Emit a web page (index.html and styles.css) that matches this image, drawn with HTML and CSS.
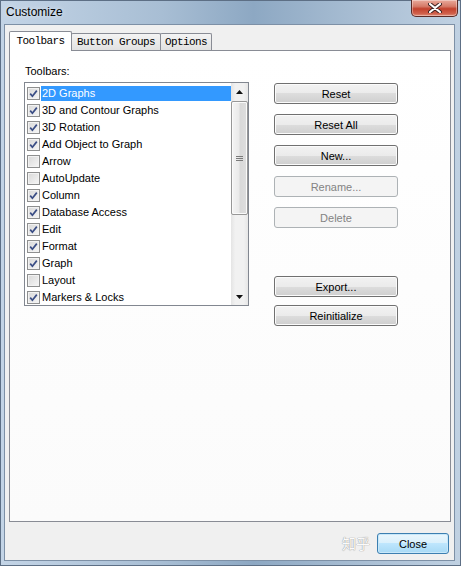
FILE: index.html
```html
<!DOCTYPE html>
<html>
<head>
<meta charset="utf-8">
<title>Customize</title>
<link rel="stylesheet" href="styles.css">
</head>
<body>
<div class="window">
  <div class="titlebar">
    <span class="title">Customize</span>
    <div class="close-x">
      <svg width="14" height="10" viewBox="0 0 14 10"><path d="M2 1 L12 9 M12 1 L2 9" stroke="#3b2020" stroke-width="4" stroke-linecap="round"/><path d="M2 1 L12 9 M12 1 L2 9" stroke="#fff" stroke-width="2.2" stroke-linecap="round"/></svg>
    </div>
  </div>
  <div class="client">
    <div class="tabs">
      <div class="tab active tab-toolbars">Toolbars</div>
      <div class="tab tab-groups">Button Groups</div>
      <div class="tab tab-options">Options</div>
    </div>
    <div class="panel">
      <div class="left">
        <div class="label">Toolbars:</div>
        <div class="listbox">
          <ul class="items">
            <li class="row sel"><span class="cb on"><svg width="11" height="11" viewBox="0 0 11 11"><path d="M2.2 5.6 L4.4 8.2 L8.8 2.6" fill="none" stroke="#3a4d85" stroke-width="1.7"/></svg></span><span class="text">2D Graphs</span></li>
            <li class="row"><span class="cb on"><svg width="11" height="11" viewBox="0 0 11 11"><path d="M2.2 5.6 L4.4 8.2 L8.8 2.6" fill="none" stroke="#3a4d85" stroke-width="1.7"/></svg></span><span class="text">3D and Contour Graphs</span></li>
            <li class="row"><span class="cb on"><svg width="11" height="11" viewBox="0 0 11 11"><path d="M2.2 5.6 L4.4 8.2 L8.8 2.6" fill="none" stroke="#3a4d85" stroke-width="1.7"/></svg></span><span class="text">3D Rotation</span></li>
            <li class="row"><span class="cb on"><svg width="11" height="11" viewBox="0 0 11 11"><path d="M2.2 5.6 L4.4 8.2 L8.8 2.6" fill="none" stroke="#3a4d85" stroke-width="1.7"/></svg></span><span class="text">Add Object to Graph</span></li>
            <li class="row"><span class="cb"></span><span class="text">Arrow</span></li>
            <li class="row"><span class="cb"></span><span class="text">AutoUpdate</span></li>
            <li class="row"><span class="cb on"><svg width="11" height="11" viewBox="0 0 11 11"><path d="M2.2 5.6 L4.4 8.2 L8.8 2.6" fill="none" stroke="#3a4d85" stroke-width="1.7"/></svg></span><span class="text">Column</span></li>
            <li class="row"><span class="cb on"><svg width="11" height="11" viewBox="0 0 11 11"><path d="M2.2 5.6 L4.4 8.2 L8.8 2.6" fill="none" stroke="#3a4d85" stroke-width="1.7"/></svg></span><span class="text">Database Access</span></li>
            <li class="row"><span class="cb on"><svg width="11" height="11" viewBox="0 0 11 11"><path d="M2.2 5.6 L4.4 8.2 L8.8 2.6" fill="none" stroke="#3a4d85" stroke-width="1.7"/></svg></span><span class="text">Edit</span></li>
            <li class="row"><span class="cb on"><svg width="11" height="11" viewBox="0 0 11 11"><path d="M2.2 5.6 L4.4 8.2 L8.8 2.6" fill="none" stroke="#3a4d85" stroke-width="1.7"/></svg></span><span class="text">Format</span></li>
            <li class="row"><span class="cb on"><svg width="11" height="11" viewBox="0 0 11 11"><path d="M2.2 5.6 L4.4 8.2 L8.8 2.6" fill="none" stroke="#3a4d85" stroke-width="1.7"/></svg></span><span class="text">Graph</span></li>
            <li class="row"><span class="cb"></span><span class="text">Layout</span></li>
            <li class="row"><span class="cb on"><svg width="11" height="11" viewBox="0 0 11 11"><path d="M2.2 5.6 L4.4 8.2 L8.8 2.6" fill="none" stroke="#3a4d85" stroke-width="1.7"/></svg></span><span class="text">Markers &amp; Locks</span></li>
          </ul>
          <div class="scrollbar">
            <div class="sb-btn"><svg width="7" height="4" viewBox="0 0 7 4"><path d="M0 4 L3.5 0 L7 4 Z" fill="#111"/></svg></div>
            <div class="thumb"><svg width="7" height="7" viewBox="0 0 7 7"><path d="M0 1.5 H7 M0 3.5 H7 M0 5.5 H7" stroke="#7a7a7a" stroke-width="1"/></svg></div>
            <div class="track"></div>
            <div class="sb-btn"><svg width="7" height="4" viewBox="0 0 7 4"><path d="M0 0 L3.5 4 L7 0 Z" fill="#111"/></svg></div>
          </div>
        </div>
      </div>
      <div class="actions">
        <div class="btn">Reset</div>
        <div class="btn">Reset All</div>
        <div class="btn">New...</div>
        <div class="btn disabled">Rename...</div>
        <div class="btn disabled">Delete</div>
        <div class="btn export">Export...</div>
        <div class="btn reinit">Reinitialize</div>
      </div>
    </div>
    <div class="footer">
      <span class="watermark">知乎</span>
      <div class="btn default">Close</div>
    </div>
  </div>
</div>
</body>
</html>
```

FILE: styles.css
```css
* { box-sizing: border-box; margin: 0; padding: 0; }
html, body { width: 461px; height: 566px; overflow: hidden; }
body {
  font-family: "Liberation Sans", Arial, sans-serif;
  font-size: 11px;
  color: #000;
  background: #fff;
}
.window {
  width: 461px;
  height: 566px;
  display: flex;
  flex-direction: column;
  position: relative;
  border: 1px solid #5d6f85;
  background: linear-gradient(to right, #c3d4e6 0%, #a8bed4 35%, #8da8c3 55%, #a5bbd1 75%, #c0d1e2 100%);
}
.titlebar {
  height: 23px;
  flex: none;
  display: flex;
  align-items: center;
  padding-left: 5px;
  padding-bottom: 2px;
}
.title {
  font-size: 12px;
  color: #000;
  text-shadow: 0 0 5px rgba(255, 255, 255, 0.7);
}
.close-x {
  position: absolute;
  left: 410px;
  top: -1px;
  width: 47px;
  height: 17px;
  border: 1px solid #5a2a26;
  border-top: none;
  border-radius: 0 0 5px 5px;
  background: linear-gradient(#e9aa9c 0%, #d57a68 40%, #c2412d 55%, #d0614c 85%, #e0907c 100%);
  box-shadow: inset 0 0 0 1px rgba(255, 255, 255, 0.35);
  display: flex;
  align-items: center;
  justify-content: center;
}
.client {
  flex: 1;
  margin: 0 5px 4px 3px;
  background: #f0f0f0;
  border: 1px solid #7d90a6;
  display: flex;
  flex-direction: column;
  padding: 6px 0 0 4px;
}
.tabs {
  display: flex;
  align-items: flex-end;
  height: 19px;
  position: relative;
  z-index: 1;
}
.tab {
  height: 17px;
  border: 1px solid #898c95;
  border-bottom: none;
  background: linear-gradient(#f4f4f4, #e1e1e1);
  font-family: "Liberation Mono", "Courier New", monospace;
  font-size: 11px;
  letter-spacing: -0.6px;
  display: flex;
  align-items: center;
  justify-content: center;
  margin-left: -1px;
  border-radius: 2px 2px 0 0;
}
.tab.active {
  height: 20px;
  margin-bottom: -1px;
  margin-left: 0;
  background: #fff;
  position: relative;
  z-index: 2;
  padding-bottom: 2px;
}
.tab-toolbars { width: 63px; }
.tab-groups { width: 90px; }
.tab-options { width: 52px; }
.panel {
  height: 472px;
  flex: none;
  margin-right: 3px;
  border: 1px solid #898c95;
  background: linear-gradient(#ffffff, #fbfbfb);
  display: flex;
  padding: 14px 0 0 14px;
}
.left { width: 225px; flex: none; }
.label {
  line-height: 13px;
  padding-left: 1px;
  margin-bottom: 4px;
}
.listbox {
  height: 224px;
  border: 1px solid #828790;
  background: #fff;
  display: flex;
  overflow: hidden;
}
.items {
  flex: 1;
  list-style: none;
  padding-top: 2px;
  overflow: hidden;
}
.row {
  height: 17px;
  display: flex;
  align-items: center;
  padding-left: 2px;
}
.cb {
  width: 13px;
  height: 13px;
  flex: none;
  border: 1px solid #8e8f8f;
  background: linear-gradient(135deg, #d8d8d8, #f6f6f6);
  box-shadow: inset 0 0 0 1px #f2f2f2;
  display: flex;
  align-items: center;
  justify-content: center;
}
.text {
  flex: 1;
  height: 15px;
  line-height: 15px;
  margin-left: 1px;
  padding-left: 1px;
  white-space: nowrap;
}
.row.sel .text {
  background: #3399ff;
  color: #fff;
}
.scrollbar {
  width: 17px;
  flex: none;
  display: flex;
  flex-direction: column;
  background: linear-gradient(to right, #e4e4e4, #f1f1f1 25%, #f1f1f1 75%, #e6e6e6);
}
.sb-btn {
  height: 17px;
  flex: none;
  display: flex;
  align-items: center;
  justify-content: center;
}
.thumb {
  height: 114px;
  flex: none;
  margin: 1px 0 0;
  border: 1px solid #979797;
  border-radius: 2px;
  background: linear-gradient(to right, #f4f4f4, #eaeaea 45%, #d9d9d9 55%, #dedede);
  box-shadow: inset 0 0 0 1px #fafafa;
  display: flex;
  align-items: center;
  justify-content: center;
}
.track { flex: 1; }
.actions {
  width: 124px;
  flex: none;
  margin-left: 25px;
  padding-top: 18px;
  display: flex;
  flex-direction: column;
  gap: 10px;
}
.btn {
  height: 21px;
  width: 124px;
  border: 1px solid #707070;
  border-radius: 3px;
  background: linear-gradient(#f2f2f2 0%, #ebebeb 50%, #dddddd 50%, #cfcfcf 100%);
  box-shadow: inset 0 0 0 1px #fbfbfb;
  display: flex;
  align-items: center;
  justify-content: center;
  font-size: 11px;
}
.btn.disabled {
  border-color: #adb2b5;
  background: #f4f4f4;
  box-shadow: none;
  color: #838383;
}
.btn.export { margin-top: 38px; }
.btn.reinit { margin-top: -2px; }
.footer {
  flex: 1;
  display: flex;
  justify-content: flex-end;
  align-items: flex-start;
  padding: 11px 5px 0 0;
  position: relative;
}
.btn.default {
  width: 72px;
  border-color: #3c7fb1;
  background: linear-gradient(#eaf6fd 0%, #d9f0fc 50%, #bee6fd 50%, #a7d9f5 100%);
  box-shadow: inset 0 0 0 1px #c8e8fa;
}
.watermark {
  position: absolute;
  right: 84px;
  top: 13px;
  font-family: "Noto Sans CJK SC", sans-serif;
  font-size: 14px;
  line-height: 16px;
  color: #fbfbfb;
  text-shadow: 0 0 1px #9a9a9a, 0 0 1px #9a9a9a;
}
```
